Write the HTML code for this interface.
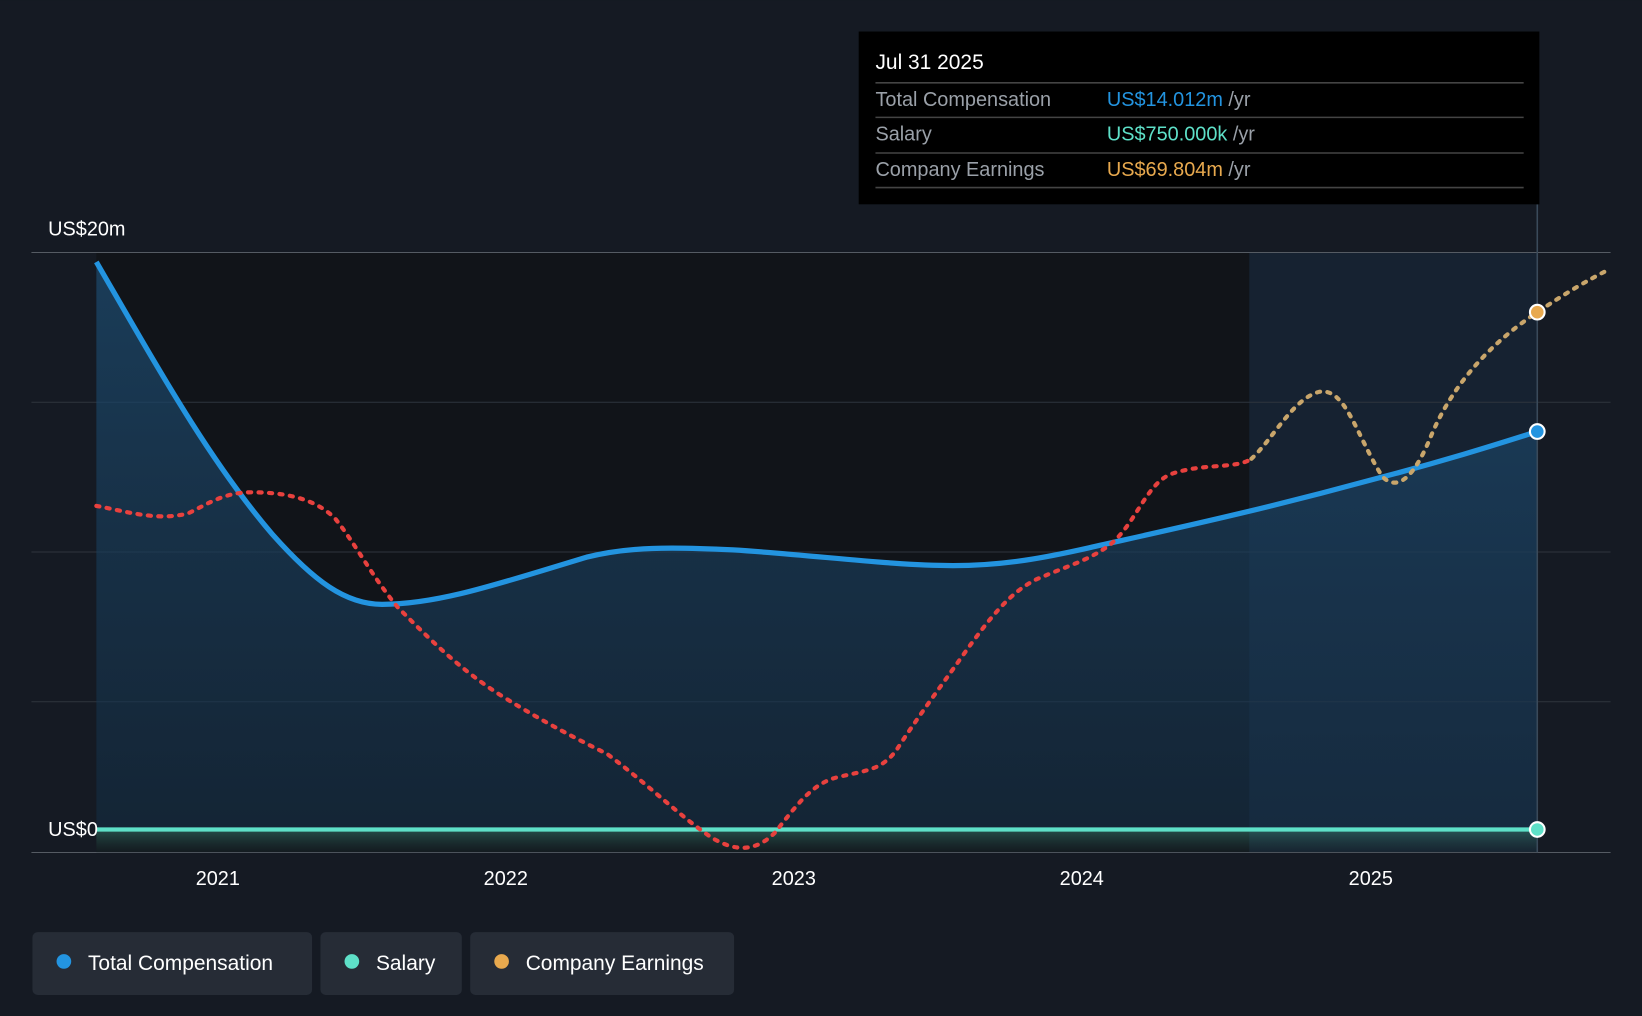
<!DOCTYPE html>
<html><head><meta charset="utf-8"><style>
html,body{margin:0;padding:0;background:#151a23;}
svg{display:block}
text{font-family:"Liberation Sans",sans-serif;}
</style></head><body>
<svg width="1642" height="1016" viewBox="0 0 1568 970" xmlns="http://www.w3.org/2000/svg">
<defs>
<linearGradient id="ag" x1="0" y1="0" x2="0" y2="1">
<stop offset="0" stop-color="#1d4a6e" stop-opacity="0.75"/>
<stop offset="1" stop-color="#163048" stop-opacity="0.6"/>
</linearGradient>
<linearGradient id="sg" x1="0" y1="0" x2="0" y2="1">
<stop offset="0" stop-color="#3a8a7c" stop-opacity="0.5"/>
<stop offset="1" stop-color="#1a2a30" stop-opacity="0.3"/>
</linearGradient>
</defs>
<rect width="1568" height="970" fill="#151a23"/>
<rect x="92" y="241" width="1101" height="573" fill="#111419"/>
<rect x="1193" y="241" width="275" height="573" fill="#162231"/>
<g stroke="#2e343d" stroke-width="1">
<line x1="30" y1="241" x2="1538" y2="241" stroke="#555b63"/>
<line x1="30" y1="384" x2="1538" y2="384"/>
<line x1="30" y1="527" x2="1538" y2="527"/>
<line x1="30" y1="670" x2="1538" y2="670"/>
</g>
<line x1="30" y1="814" x2="1538" y2="814" stroke="#555b63"/>
<path d="M92,250 C150,350 200,440 260,510 C300,555 330,577 365,577 C420,577 480,556 560,532 C600,522 640,522 700,525 C780,530 850,540 910,540 C960,540 1000,532 1040,523 C1120,505 1200,488 1310,458 C1380,440 1430,424 1468,412 L1468,792 L92,792 Z" fill="url(#ag)"/>
<rect x="92" y="792" width="1376" height="22" fill="url(#sg)"/>
<line x1="1468" y1="195" x2="1468" y2="814" stroke="#3a4a5a" stroke-width="1.5"/>
<path d="M92,250 C150,350 200,440 260,510 C300,555 330,577 365,577 C420,577 480,556 560,532 C600,522 640,522 700,525 C780,530 850,540 910,540 C960,540 1000,532 1040,523 C1120,505 1200,488 1310,458 C1380,440 1430,424 1468,412" fill="none" stroke="#2394e0" stroke-width="5"/>
<line x1="92" y1="792" x2="1468" y2="792" stroke="#5ee0c8" stroke-width="4"/>
<path d="M92,483 C120,488 150,498 180,490 C200,480 215,470 240,470 C270,470 300,475 320,495 C340,520 355,550 380,580 C410,610 440,640 480,665 C520,690 550,705 580,720 C620,750 650,780 680,800 C700,812 720,815 740,795 C760,770 775,748 800,742 C830,735 845,735 860,710 C880,680 895,660 920,625 C945,590 965,565 990,553 C1020,540 1040,535 1060,520 C1085,500 1095,460 1120,452 C1150,442 1180,448 1195,438" fill="none" stroke="#e8413e" stroke-width="4" stroke-dasharray="3,7" stroke-linecap="round"/>
<path d="M1195,438 C1215,420 1235,380 1260,374 C1285,370 1295,415 1320,455 C1335,470 1350,455 1365,420 C1385,370 1420,330 1468,298 C1495,280 1515,268 1535,258" fill="none" stroke="#c9a66b" stroke-width="4" stroke-dasharray="3,7" stroke-linecap="round"/>
<circle cx="1468" cy="298" r="7" fill="#e8a94e" stroke="#fff" stroke-width="2"/>
<circle cx="1468" cy="412" r="7" fill="#2394e0" stroke="#fff" stroke-width="2"/>
<circle cx="1468" cy="792" r="7" fill="#5ee0c8" stroke="#fff" stroke-width="2"/>
<text x="46" y="225" fill="#fff" font-size="19">US$20m</text>
<text x="46" y="798" fill="#fff" font-size="19">US$0</text>
<g fill="#fff" font-size="19" text-anchor="middle">
<text x="208" y="845">2021</text><text x="483" y="845">2022</text><text x="758" y="845">2023</text><text x="1033" y="845">2024</text><text x="1309" y="845">2025</text>
</g>
<rect x="820" y="30" width="650" height="165" fill="#000"/>
<text x="836" y="66" fill="#fff" font-size="20">Jul 31 2025</text>
<g stroke="#444" stroke-width="1.5">
<line x1="836" y1="79" x2="1455" y2="79"/><line x1="836" y1="112" x2="1455" y2="112"/><line x1="836" y1="146" x2="1455" y2="146"/><line x1="836" y1="179" x2="1455" y2="179"/>
</g>
<g font-size="19" fill="#9aa0a8">
<text x="836" y="101">Total Compensation</text>
<text x="836" y="134">Salary</text>
<text x="836" y="168">Company Earnings</text>
</g>
<text x="1057" y="101" font-size="19" fill="#2394e0">US$14.012m <tspan fill="#9aa0a8">/yr</tspan></text>
<text x="1057" y="134" font-size="19" fill="#5ee0c8">US$750.000k <tspan fill="#9aa0a8">/yr</tspan></text>
<text x="1057" y="168" font-size="19" fill="#e8a94e">US$69.804m <tspan fill="#9aa0a8">/yr</tspan></text>
<rect x="31" y="890" width="267" height="60" rx="5" fill="#262c36"/>
<circle cx="61" cy="918" r="7" fill="#2394e0"/>
<text x="84" y="926" fill="#fff" font-size="20">Total Compensation</text>
<rect x="306" y="890" width="135" height="60" rx="5" fill="#262c36"/>
<circle cx="336" cy="918" r="7" fill="#5ee0c8"/>
<text x="359" y="926" fill="#fff" font-size="20">Salary</text>
<rect x="449" y="890" width="252" height="60" rx="5" fill="#262c36"/>
<circle cx="479" cy="918" r="7" fill="#e8a94e"/>
<text x="502" y="926" fill="#fff" font-size="20">Company Earnings</text>
</svg>
</body></html>
